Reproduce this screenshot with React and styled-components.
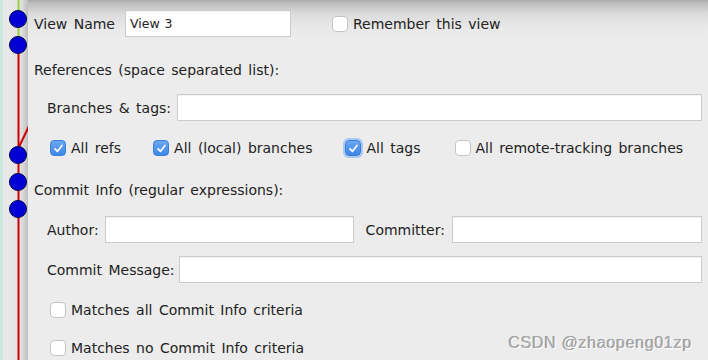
import React from "react";
import styled, { createGlobalStyle } from "styled-components";

const GlobalStyle = createGlobalStyle`
    html, body {
        margin: 0;
        padding: 0;
        width: 708px;
        height: 360px;
        overflow: hidden;
        background: #ececec;
    }
`;

const Window = styled.div`
    display: flex;
    width: 708px;
    height: 360px;
    font-family: "DejaVu Sans", "Liberation Sans", sans-serif;
    font-size: 14px;
    word-spacing: 2px;
    color: #222;
`;

const GraphStrip = styled.div`
    width: 28px;
    flex-shrink: 0;
    background: linear-gradient(to right, #cfe6e1 0, #cfe6e1 3px, #e9e9e9 3px, #e4e4e4 20px, #c9c9c9 26px, #bdbdbd 28px);
`;

const Panel = styled.div`
    flex: 1;
    display: flex;
    flex-direction: column;
    padding: 10px 6px 0 6px;
    background: linear-gradient(to bottom, #a9a9a9 0, #bcbcbc 3px, #dcdcdc 14px, #e9e9e9 28px, #ececec 40px);
`;

const Row = styled.div`
    display: flex;
    align-items: center;
    height: ${p => p.$h || 27}px;
    margin-top: ${p => p.$mt || 0}px;
    padding-left: ${p => p.$indent || 0}px;
`;

const Label = styled.span`
    white-space: nowrap;
    margin-right: ${p => p.$gap || 6}px;
    margin-left: ${p => p.$ml || 0}px;
`;

const Field = styled.div`
    box-sizing: border-box;
    height: 27px;
    width: ${p => (p.$w ? `${p.$w}px` : "auto")};
    flex: ${p => (p.$w ? "none" : 1)};
    background: #fff;
    border: 1px solid #cbcbcb;
    box-shadow: inset 0 1px 1px rgba(0, 0, 0, 0.06);
    display: flex;
    align-items: center;
    padding-left: 4px;
    font-size: 12.5px;
    word-spacing: 1px;
    color: #222;
`;

const Box = styled.span`
    box-sizing: border-box;
    width: 16px;
    height: 16px;
    border-radius: 4px;
    flex-shrink: 0;
    display: inline-flex;
    align-items: center;
    justify-content: center;
    margin-right: 5px;
    background: ${p => (p.$on ? "linear-gradient(#6aa8f0, #3d86e6)" : "#fff")};
    border: 1px solid ${p => (p.$on ? "#3c7fd8" : "#c4c4c4")};
    box-shadow: ${p => (p.$focus ? "0 0 0 2px #a6c8f3" : "none")};
`;

const Check = styled.label`
    display: inline-flex;
    align-items: center;
    white-space: nowrap;
    margin-left: ${p => p.$ml || 0}px;
`;

const CheckBox = ({ on, focus, label, ml }) => (
    <Check $ml={ml}>
        <Box $on={on} $focus={focus}>
            {on && (
                <svg width="11" height="11" viewBox="0 0 11 11">
                    <path d="M2 5.8 L4.5 8.3 L9 2.5" fill="none" stroke="#fff" strokeWidth="1.7" strokeLinecap="round" strokeLinejoin="round" />
                </svg>
            )}
        </Box>
        {label}
    </Check>
);

const Heading = styled.div`
    height: 20px;
    display: flex;
    align-items: center;
    margin-top: ${p => p.$mt}px;
`;

const Watermark = styled.div`
    position: absolute;
    right: 16px;
    bottom: 8px;
    font-family: "Liberation Sans", Arial, sans-serif;
    font-size: 16px;
    word-spacing: 0;
    letter-spacing: 0.7px;
    color: #a9a9a9;
    text-shadow: 1px 1px 0 #fff, -0.5px -0.5px 0 #8a8a8a;
`;

const Graph = () => (
    <svg width="28" height="360" viewBox="0 0 28 360">
        <line x1="18.5" y1="0" x2="18.5" y2="36" stroke="#93d13c" strokeWidth="2" />
        <line x1="18.5" y1="36" x2="18.5" y2="360" stroke="#cc0000" strokeWidth="2" />
        <line x1="30" y1="124" x2="18.5" y2="148" stroke="#cc0000" strokeWidth="2" />
        {[19, 45, 155, 182, 209].map(cy => (
            <circle key={cy} cx="18" cy={cy} r="8.5" fill="#0000d4" stroke="#000050" strokeWidth="1" />
        ))}
    </svg>
);

export default function App() {
    return (
        <>
            <GlobalStyle />
            <Window>
                <GraphStrip>
                    <Graph />
                </GraphStrip>
                <Panel>
                    <Row>
                        <Label $gap={10}>View Name</Label>
                        <Field $w={166}>View 3</Field>
                        <CheckBox label="Remember this view" ml={41} />
                    </Row>
                    <Heading $mt={23}>References (space separated list):</Heading>
                    <Row $mt={14} $indent={13}>
                        <Label $gap={6}>Branches &amp; tags:</Label>
                        <Field />
                    </Row>
                    <Row $h={20} $mt={17} $indent={16}>
                        <CheckBox on label="All refs" />
                        <CheckBox on label="All (local) branches" ml={32} />
                        <CheckBox on focus label="All tags" ml={33} />
                        <CheckBox label="All remote-tracking branches" ml={34} />
                    </Row>
                    <Heading $mt={22}>Commit Info (regular expressions):</Heading>
                    <Row $mt={16} $indent={13}>
                        <Label $gap={6}>Author:</Label>
                        <Field $w={249} />
                        <Label $ml={12} $gap={7}>Committer:</Label>
                        <Field />
                    </Row>
                    <Row $mt={13} $indent={13}>
                        <Label $gap={4}>Commit Message:</Label>
                        <Field />
                    </Row>
                    <Row $h={20} $mt={17} $indent={16}>
                        <CheckBox label="Matches all Commit Info criteria" />
                    </Row>
                    <Row $h={20} $mt={18} $indent={16}>
                        <CheckBox label="Matches no Commit Info criteria" />
                    </Row>
                </Panel>
                <Watermark>CSDN @zhaopeng01zp</Watermark>
            </Window>
        </>
    );
}
